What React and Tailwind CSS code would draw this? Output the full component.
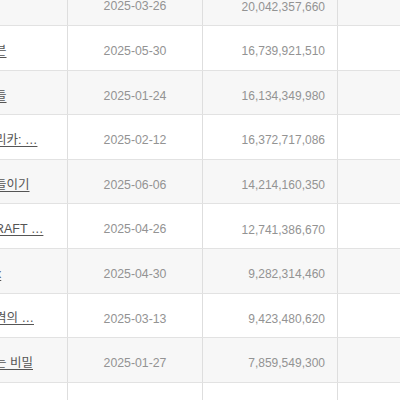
const rows = [
  { title: '', date: '2025-03-26', amount: '20,042,357,660' },
  { title: '븐', date: '2025-05-30', amount: '16,739,921,510' },
  { title: '들', date: '2025-01-24', amount: '16,134,349,980' },
  { title: '리카: …', date: '2025-02-12', amount: '16,372,717,086' },
  { title: '들이기', date: '2025-06-06', amount: '14,214,160,350' },
  { title: 'RAFT …', date: '2025-04-26', amount: '12,741,386,670' },
  { title: 'x', date: '2025-04-30', amount: '9,282,314,460' },
  { title: '격의 …', date: '2025-03-13', amount: '9,423,480,620' },
  { title: '는 비밀', date: '2025-01-27', amount: '7,859,549,300' },
  { title: '', date: '', amount: '' },
];

const App = () => {
  return (
    <div className="w-[400px] h-[400px] overflow-hidden bg-white font-['Liberation_Sans','Noto_Sans_CJK_KR',sans-serif]">
      <div className="mt-[-18.6px]">
        {rows.map((r, i) => (
          <div
            key={i}
            className={`flex h-[44.6px] border-b border-[#e2e2e2] ${i % 2 === 0 ? 'bg-[#f7f7f7]' : 'bg-white'}`}
          >
            <div className="w-[68px] shrink-0 flex items-center pt-[7px] overflow-hidden border-r border-[#dedede]">
              {r.title && (
                <span className="ml-[-5px] whitespace-nowrap text-[12.5px] text-[#555] underline underline-offset-2">
                  {r.title}
                </span>
              )}
            </div>
            <div className="w-[135px] shrink-0 flex items-center justify-center pt-[7px] border-r border-[#dedede] text-[12.3px] text-[#939393]">
              {r.date}
            </div>
            <div className="w-[135px] shrink-0 flex items-center justify-end pt-[7px] pr-[12px] border-r border-[#dedede] text-[12px] text-[#939393]">
              {r.amount}
            </div>
            <div className="flex-1" />
          </div>
        ))}
      </div>
    </div>
  );
};

export default App;
